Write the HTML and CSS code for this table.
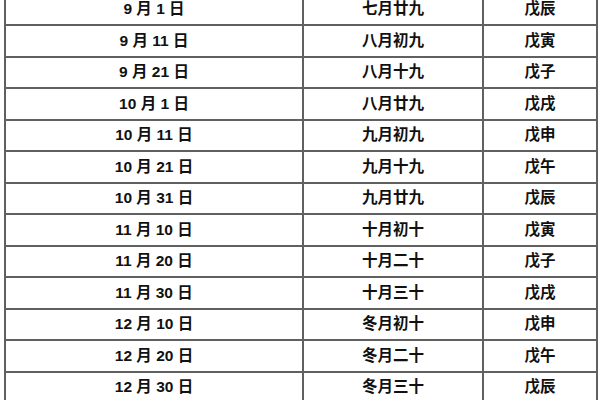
FILE: index.html
```html
<!DOCTYPE html>
<html lang="zh-CN">
<head>
<meta charset="utf-8">
<link rel="stylesheet" href="styles.css">
</head>
<body>
<table class="cal">
<colgroup><col class="c1"><col class="c2"><col class="c3"></colgroup>
<tbody>
<tr><td>9 月 1 日</td><td>七月廿九</td><td>戊辰</td></tr>
<tr><td>9 月 11 日</td><td>八月初九</td><td>戊寅</td></tr>
<tr><td>9 月 21 日</td><td>八月十九</td><td>戊子</td></tr>
<tr><td>10 月 1 日</td><td>八月廿九</td><td>戊戌</td></tr>
<tr><td>10 月 11 日</td><td>九月初九</td><td>戊申</td></tr>
<tr><td>10 月 21 日</td><td>九月十九</td><td>戊午</td></tr>
<tr><td>10 月 31 日</td><td>九月廿九</td><td>戊辰</td></tr>
<tr><td>11 月 10 日</td><td>十月初十</td><td>戊寅</td></tr>
<tr><td>11 月 20 日</td><td>十月二十</td><td>戊子</td></tr>
<tr><td>11 月 30 日</td><td>十月三十</td><td>戊戌</td></tr>
<tr><td>12 月 10 日</td><td>冬月初十</td><td>戊申</td></tr>
<tr><td>12 月 20 日</td><td>冬月二十</td><td>戊午</td></tr>
<tr><td>12 月 30 日</td><td>冬月三十</td><td>戊辰</td></tr>
</tbody>
</table>
</body>
</html>
```
FILE: styles.css
```css
html, body {
  margin: 0;
  padding: 0;
  background: #ffffff;
  overflow: hidden;
}
.cal {
  border-collapse: collapse;
  table-layout: fixed;
  width: 592px;
  margin: -7.5px 0 0 4px;
  font-family: "Liberation Sans", "Noto Sans CJK SC", sans-serif;
  font-weight: bold;
  font-size: 15.5px;
  color: #111111;
}
.c1 { width: 298px; }
.c2 { width: 180px; }
.c3 { width: 114px; }
.cal tr { height: 31.5px; }
.cal td {
  border: 2px solid #606060;
  padding: 0;
  text-align: center;
  vertical-align: middle;
  line-height: 20px;
}
```
